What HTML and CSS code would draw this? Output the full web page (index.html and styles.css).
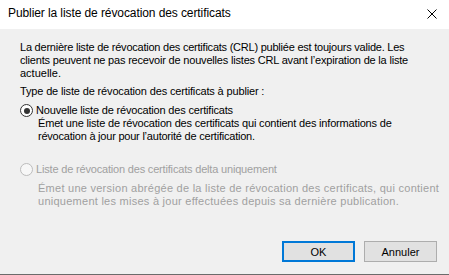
FILE: index.html
```html
<!DOCTYPE html>
<html lang="fr">
<head>
<meta charset="utf-8">
<title>Publier la liste de révocation des certificats</title>
<link rel="stylesheet" href="styles.css">
</head>
<body>
<div class="window">
  <div class="titlebar">
    <span class="title">Publier la liste de révocation des certificats</span>
    <svg class="close" width="10" height="10" viewBox="0 0 10 10"><path d="M0.5 0.5 L9.5 9.5 M9.5 0.5 L0.5 9.5" stroke="#000" stroke-width="1" fill="none"/></svg>
  </div>
  <div class="content">
    <p class="intro"><span class="l1">La dernière liste de révocation des certificats (CRL) publiée est toujours valide. Les</span><br><span class="l2">clients peuvent ne pas recevoir de nouvelles listes CRL avant l’expiration de la liste</span><br><span class="l3">actuelle.</span></p>
    <p class="type">Type de liste de révocation des certificats à publier :</p>
    <div class="option">
      <div class="radio-row"><span class="radio checked"></span><span class="label">Nouvelle liste de révocation des certificats</span></div>
      <p class="desc"><span class="d1">Émet une liste de révocation des certificats qui contient des informations de</span><br><span class="d2">révocation à jour pour l’autorité de certification.</span></p>
    </div>
    <div class="option disabled">
      <div class="radio-row"><span class="radio"></span><span class="label">Liste de révocation des certificats delta uniquement</span></div>
      <p class="desc desc2"><span class="d3">Émet une version abrégée de la liste de révocation des certificats, qui contient</span><br><span class="d4">uniquement les mises à jour effectuées depuis sa dernière publication.</span></p>
    </div>
  </div>
  <div class="buttons">
    <button class="btn default">OK</button>
    <button class="btn">Annuler</button>
  </div>
</div>
</body>
</html>
```

FILE: styles.css
```css
html, body {
  margin: 0;
  padding: 0;
}
body {
  width: 449px;
  height: 275px;
  overflow: hidden;
  background: #f0f0f0;
}
.window {
  width: 449px;
  height: 275px;
  box-sizing: border-box;
  border-bottom: 1px solid #6b6b6b;
  display: flex;
  flex-direction: column;
  font-family: "Liberation Sans", Arial, sans-serif;
  font-size: 11px;
  line-height: 13px;
  color: #000;
}
.titlebar {
  height: 29px;
  flex: none;
  background: #fff;
  display: flex;
  align-items: center;
  justify-content: space-between;
  padding: 0 12px 0 8px;
  box-sizing: border-box;
}
.title {
  font-family: "Liberation Sans", Arial, sans-serif;
  font-size: 12px;
  letter-spacing: -0.09px;
  margin-top: -2px;
}
.close {
  display: block;
  margin-top: -1px;
}
.content {
  padding: 12px 0 0 20px;
  flex: 1;
}
p {
  margin: 0;
  white-space: nowrap;
}
.l1 { letter-spacing: -0.23px; }
.l2 { letter-spacing: -0.19px; }
.type { letter-spacing: -0.15px; }
.label { letter-spacing: -0.18px; }
.d1 { letter-spacing: -0.18px; }
.d2 { letter-spacing: -0.22px; }
.d3 { letter-spacing: 0.26px; }
.d4 { letter-spacing: 0.26px; }
.intro {
  margin-bottom: 5px;
}
.type {
  margin-bottom: 6px;
}
.radio-row {
  display: flex;
  align-items: center;
  height: 13px;
}
.radio {
  width: 13px;
  height: 13px;
  box-sizing: border-box;
  border: 1px solid #333;
  border-radius: 50%;
  background: #fff;
  position: relative;
  margin-right: 3px;
  flex: none;
}
.radio.checked::after {
  content: "";
  position: absolute;
  left: 2.5px;
  top: 2.5px;
  width: 6px;
  height: 6px;
  border-radius: 50%;
  background: #333;
}
.desc {
  margin-left: 18px;
  margin-top: 0;
}
.option.disabled {
  margin-top: 20px;
  color: #a0a0a0;
}
.option.disabled .radio {
  border-color: #bcbcbc;
  background: #f7f7f7;
}
.desc2 {
  margin-top: 6px;
}
.buttons {
  display: flex;
  justify-content: flex-end;
  gap: 9px;
  padding: 0 12px 12px 0;
}
.btn {
  width: 73px;
  height: 21px;
  box-sizing: border-box;
  background: #e1e1e1;
  border: 1px solid #adadad;
  font-family: "Liberation Sans", Arial, sans-serif;
  font-size: 11px;
  color: #000;
  padding: 0;
  margin: 0;
}
.btn.default {
  border: 2px solid #0078d7;
}
```
